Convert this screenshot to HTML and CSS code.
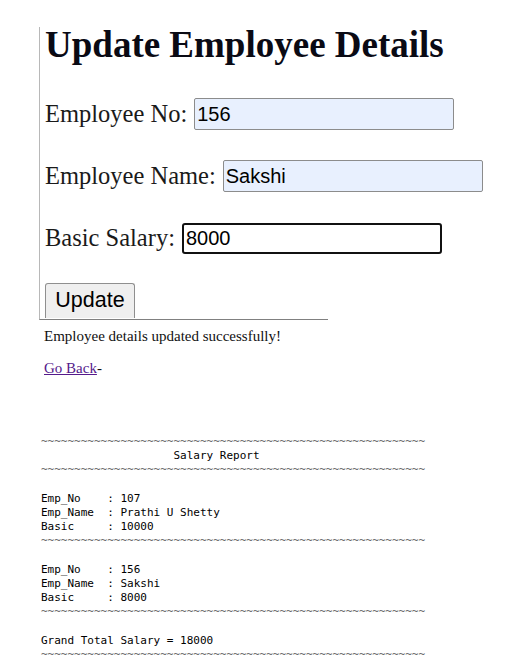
FILE: index.html
```html
<!DOCTYPE html>
<html>
<head>
<meta charset="utf-8">
<title>Update Employee Details</title>
<link rel="stylesheet" href="styles.css">
</head>
<body>
<div class="panel">
  <h1 class="title">Update Employee Details</h1>
  <form class="form">
    <div class="row"><label class="label">Employee No:</label><input class="field autofill" value="156"></div>
    <div class="row"><label class="label">Employee Name:</label><input class="field autofill" value="Sakshi"></div>
    <div class="row"><label class="label">Basic Salary:</label><input class="field focused" value="8000"></div>
    <div class="row"><button type="button" class="btn">Update</button></div>
  </form>
</div>
<p class="msg">Employee details updated successfully!</p>
<p class="back-line"><a href="#" class="back">Go Back</a>-</p>
<pre class="report"><span class="rule">~~~~~~~~~~~~~~~~~~~~~~~~~~~~~~~~~~~~~~~~~~~~~~~~~~~~~~~~~~</span>
                    Salary Report
<span class="rule">~~~~~~~~~~~~~~~~~~~~~~~~~~~~~~~~~~~~~~~~~~~~~~~~~~~~~~~~~~</span>

Emp_No    : 107
Emp_Name  : Prathi U Shetty
Basic     : 10000
<span class="rule">~~~~~~~~~~~~~~~~~~~~~~~~~~~~~~~~~~~~~~~~~~~~~~~~~~~~~~~~~~</span>

Emp_No    : 156
Emp_Name  : Sakshi
Basic     : 8000
<span class="rule">~~~~~~~~~~~~~~~~~~~~~~~~~~~~~~~~~~~~~~~~~~~~~~~~~~~~~~~~~~</span>

Grand Total Salary = 18000
<span class="rule">~~~~~~~~~~~~~~~~~~~~~~~~~~~~~~~~~~~~~~~~~~~~~~~~~~~~~~~~~~</span></pre>
</body>
</html>
```
FILE: styles.css
```css
body {
  margin: 0;
  background: #fff;
  color: #000;
  font-family: "Liberation Serif", "Times New Roman", serif;
}

.panel {
  margin: 27px 0 0 39px;
  width: 283px;
  height: 292px;
  padding-left: 5px;
  border-left: 1px solid #b8b8b8;
  border-bottom: 1px solid #808080;
}

.title {
  margin: 0 0 35px 0;
  font-size: 37px;
  line-height: 36px;
  font-weight: bold;
  color: #0a0a14;
  white-space: nowrap;
}

.form {
  display: flex;
  flex-direction: column;
  gap: 30px;
}

.row {
  display: flex;
  align-items: center;
  gap: 7px;
  height: 32px;
  white-space: nowrap;
}

.row:last-child {
  align-items: flex-start;
}

.label {
  font-size: 24.5px;
  color: #1a1a1a;
}

.field {
  box-sizing: border-box;
  flex: none;
  width: 260px;
  height: 32px;
  padding: 0 2px;
  margin: 0;
  font-family: "Liberation Sans", Arial, sans-serif;
  font-size: 20px;
  color: #000;
  outline: none;
}

.autofill {
  background: #e8f0fe;
  border: 1px solid #8c8c8c;
  border-radius: 2px;
}

.focused {
  background: #fff;
  border: 2px solid #111;
  border-radius: 3px;
  height: 31px;
}

.btn {
  box-sizing: border-box;
  width: 90px;
  height: 35px;
  margin: -1px 0 0 0;
  padding: 0 0 1px 0;
  font-family: "Liberation Sans", Arial, sans-serif;
  font-size: 21.5px;
  color: #000;
  background: #efefef;
  border: 1px solid #8f8f8f;
  border-bottom-width: 0;
  border-radius: 3px 3px 0 0;
}

.msg {
  margin: 8px 0 0 44px;
  font-size: 15px;
  color: #111;
}

.back-line {
  margin: 15px 0 0 44px;
  font-size: 15px;
  color: #111;
}

.back {
  color: #551a8b;
  text-decoration: underline;
}

.report {
  margin: 58px 0 0 41px;
  font-family: "DejaVu Sans Mono", "Liberation Mono", monospace;
  font-size: 11px;
  line-height: 14.2px;
  color: #000;
}

.rule {
  color: #666;
}
```
